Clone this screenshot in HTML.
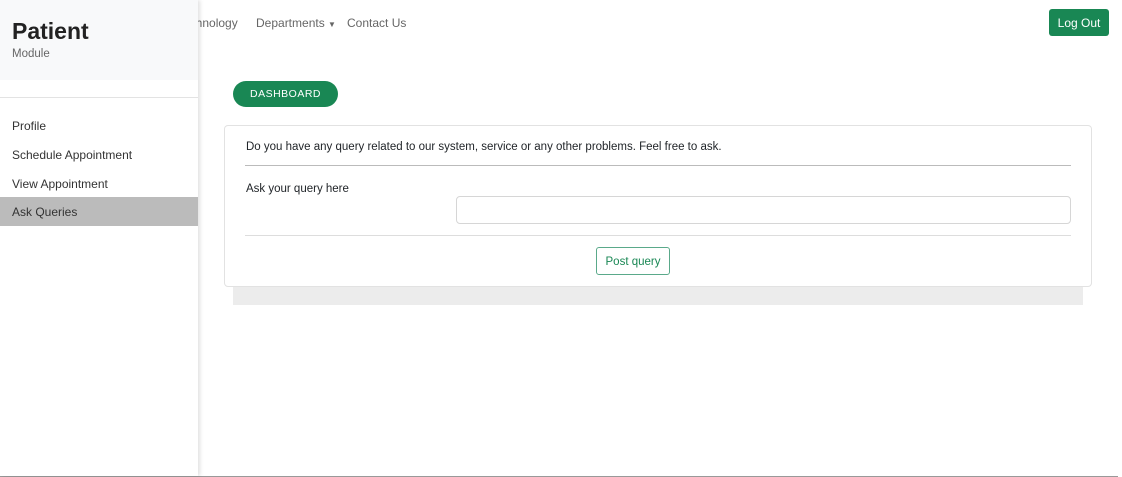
<!DOCTYPE html>
<html><head><style>
*{margin:0;padding:0;box-sizing:border-box}
body{width:1122px;height:477px;position:relative;background:#fff;font-family:"Liberation Sans",sans-serif;color:#212529;overflow:hidden}
.abs{position:absolute;white-space:nowrap}
.side{position:absolute;left:0;top:0;width:198px;height:476px;background:#fff;box-shadow:2px 0 4px rgba(0,0,0,.12);z-index:2}
.head{position:absolute;left:0;top:0;width:198px;height:80px;background:#f8f9fa}
.nav{font-size:12px;color:#666}
.item{position:absolute;left:0;width:198px;height:29px;font-size:12px;padding:8px 12px;color:#333}
</style></head><body>
<div class="abs nav" style="left:177px;top:16px">Technology</div>
<div class="abs nav" style="left:256px;top:16px">Departments <span style="font-size:8px">▼</span></div>
<div class="abs nav" style="left:347px;top:16px">Contact Us</div>
<div class="abs" style="left:1049px;top:9px;width:60px;height:27px;background:#198754;border-radius:3px;color:#fff;font-size:12px;text-align:center;line-height:28px">Log Out</div>
<div class="side">
<div class="head"></div>
<div class="abs" style="left:12px;top:18px;font-size:23px;font-weight:bold;color:#222">Patient</div>
<div class="abs" style="left:12px;top:48px;font-size:11.5px;color:#666">Module</div>
<div class="abs" style="left:0;top:97px;width:198px;height:1px;background:#e3e3e3"></div>
<div class="item" style="top:111px">Profile</div>
<div class="item" style="top:140px">Schedule Appointment</div>
<div class="item" style="top:169px">View Appointment</div>
<div class="item" style="top:197px;background:#bbb">Ask Queries</div>
</div>
<div class="abs" style="left:233px;top:81px;width:105px;height:26px;background:#198754;border-radius:13px;color:#fff;font-size:10.5px;letter-spacing:.5px;text-align:center;line-height:27px">DASHBOARD</div>
<div class="abs" style="left:233px;top:286px;width:850px;height:19px;background:#ececec"></div>
<div class="abs" style="left:224px;top:125px;width:868px;height:162px;border:1px solid #e2e2e2;border-radius:4px;background:#fff"></div>
<div class="abs" style="left:246px;top:141px;font-size:11.5px">Do you have any query related to our system, service or any other problems. Feel free to ask.</div>
<div class="abs" style="left:245px;top:165px;width:826px;height:1px;background:#bbb"></div>
<div class="abs" style="left:246px;top:183px;font-size:11.5px">Ask your query here</div>
<div class="abs" style="left:456px;top:196px;width:615px;height:28px;border:1px solid #d6d6d6;border-radius:4px"></div>
<div class="abs" style="left:245px;top:235px;width:826px;height:1px;background:#ddd"></div>
<div class="abs" style="left:596px;top:247px;width:74px;height:28px;border:1px solid #5aa98a;border-radius:3px;color:#198754;font-size:11.5px;text-align:center;line-height:29px">Post query</div>
<div class="abs" style="left:0;top:476px;width:1118px;height:1px;background:#999"></div>
</body></html>
